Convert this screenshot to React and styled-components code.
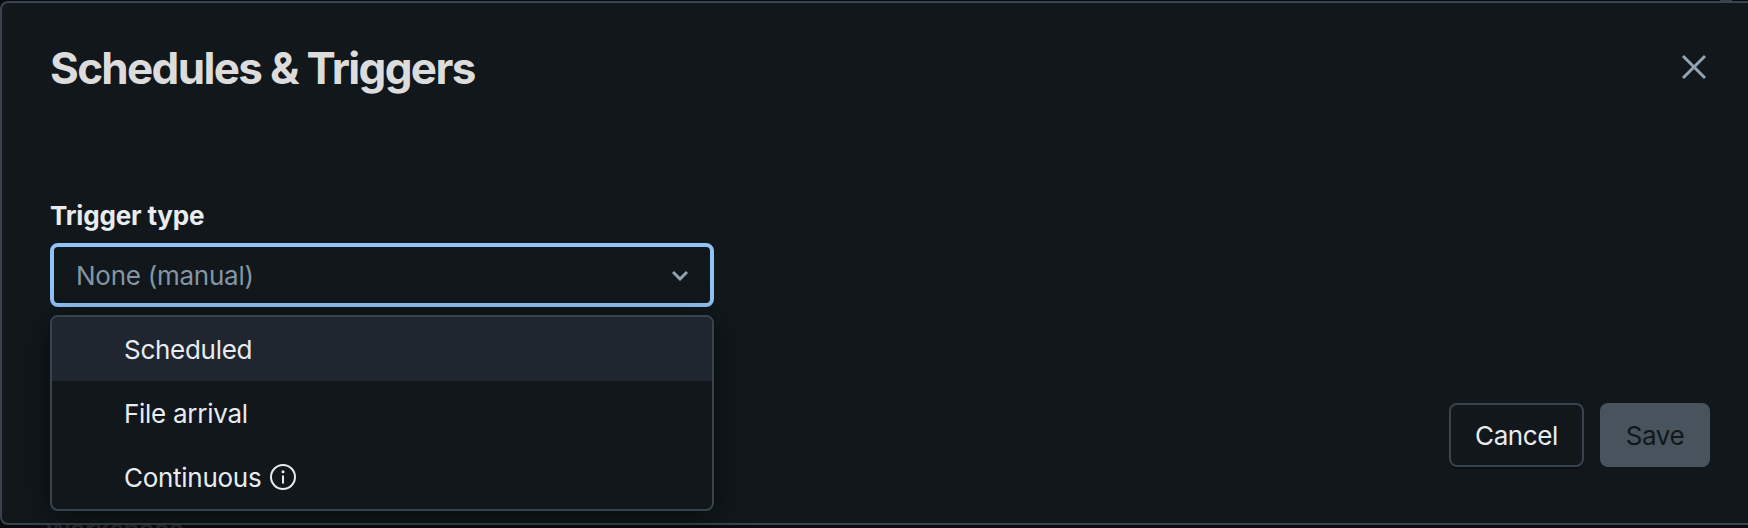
import React from "react";
import styled, { createGlobalStyle } from "styled-components";

const GlobalStyle = createGlobalStyle`
  * { box-sizing: border-box; }
  body { margin: 0; background: #090a0e; font-family: Inter, "Liberation Sans", sans-serif; overflow: hidden; }
  button { font-family: inherit; }
`;

const Page = styled.div`
  position: relative;
  width: 1748px;
  height: 528px;
  padding-top: 1px;
  overflow: hidden;
`;

const Behind = styled.div`
  position: absolute;
  left: 45px;
  top: 514px;
  font-size: 26px;
  line-height: 32px;
  font-weight: 600;
  letter-spacing: -0.5px;
  color: #25282c;
`;

const Sliver = styled.div`
  position: absolute;
  right: 16px;
  top: 0;
  width: 12px;
  height: 1px;
  background: #3c3e42;
`;

const Dialog = styled.section`
  position: relative;
  width: 1760px;
  height: 524px;
  border: 2px solid #37444f;
  border-radius: 8px;
  background: #11171b;
  padding: 37px 48px 56px;
  display: flex;
  flex-direction: column;
`;

const Header = styled.header`
  display: flex;
  width: 1660px;
  height: 56px;
  justify-content: space-between;
  align-items: center;
`;

const Title = styled.h1`
  margin: 0;
  font-size: 44px;
  line-height: 56px;
  font-weight: 700;
  letter-spacing: -1.67px;
  color: #dcdcdc;
`;

const IconButton = styled.button`
  display: flex;
  padding: 0;
  margin: -2px 3px 0 0;
  border: 0;
  background: none;
  color: #92a4b3;
`;

const Field = styled.div`
  position: relative;
  width: 664px;
  margin-top: 104px;
`;

const Label = styled.label`
  display: block;
  height: 43px;
  font-size: 26px;
  line-height: 32px;
  font-weight: 700;
  letter-spacing: -0.17px;
  color: #e8ecf0;
`;

const Select = styled.div`
  display: flex;
  align-items: center;
  justify-content: space-between;
  height: 64px;
  padding: 0 22px;
  border: 4px solid #90c3f8;
  border-radius: 8px;
  font-size: 26px;
  letter-spacing: -0.25px;
  color: #8396a5;
`;

const Menu = styled.ul`
  position: absolute;
  top: 115px;
  left: 0;
  width: 664px;
  margin: 0;
  padding: 0;
  list-style: none;
  border: 2px solid #37444f;
  border-radius: 8px;
  background: #11171b;
  overflow: hidden;
  box-shadow: 0 6px 32px rgba(0, 0, 0, 0.5);
`;

const Option = styled.li`
  display: flex;
  align-items: center;
  gap: 9px;
  height: 64px;
  padding-left: 72px;
  font-size: 26px;
  letter-spacing: -0.28px;
  color: #e8ecf0;
  background: ${(p) => (p.$active ? "#1f262f" : "transparent")};
`;

const Footer = styled.footer`
  display: flex;
  gap: 16px;
  width: 1660px;
  margin-top: auto;
  justify-content: flex-end;
`;

const Button = styled.button`
  width: ${(p) => p.$width}px;
  height: 64px;
  padding: 0;
  border-radius: 8px;
  border: 2px solid ${(p) => (p.$muted ? "#48535e" : "#37444f")};
  background: ${(p) => (p.$muted ? "#48535e" : "#11171b")};
  color: ${(p) => (p.$muted ? "#11171b" : "#e8ecf0")};
  box-shadow: ${(p) => (p.$muted ? "none" : "0 2px 0 rgba(0, 0, 0, 0.35)")};
  font-size: 26px;
  letter-spacing: -0.4px;
`;

const CloseIcon = () => (
  <svg width="26" height="26" viewBox="0 0 26 26" fill="none" stroke="currentColor" strokeWidth="3">
    <path d="M2 2L24 24M24 2L2 24" />
  </svg>
);

const ChevronIcon = () => (
  <svg width="16" height="12" viewBox="0 0 16 12" fill="none" stroke="#92a4b3" strokeWidth="3">
    <path d="M1 3L8 10L15 3" />
  </svg>
);

const InfoIcon = () => (
  <svg width="26" height="26" viewBox="0 0 26 26" fill="none" stroke="currentColor" strokeWidth="2">
    <circle cx="13" cy="13" r="12" />
    <path d="M13 11.5V19.5" />
    <circle cx="13" cy="7.8" r="1.5" fill="currentColor" stroke="none" />
  </svg>
);

export default function App() {
  return (
    <Page>
      <GlobalStyle />
      <Behind>Workspace</Behind>
      <Sliver />
      <Dialog>
        <Header>
          <Title>Schedules &amp; Triggers</Title>
          <IconButton aria-label="Close"><CloseIcon /></IconButton>
        </Header>
        <Field>
          <Label>Trigger type</Label>
          <Select>None (manual)<ChevronIcon /></Select>
          <Menu>
            <Option $active>Scheduled</Option>
            <Option>File arrival</Option>
            <Option>Continuous<InfoIcon /></Option>
          </Menu>
        </Field>
        <Footer>
          <Button $width={135}>Cancel</Button>
          <Button $width={110} $muted>Save</Button>
        </Footer>
      </Dialog>
    </Page>
  );
}
